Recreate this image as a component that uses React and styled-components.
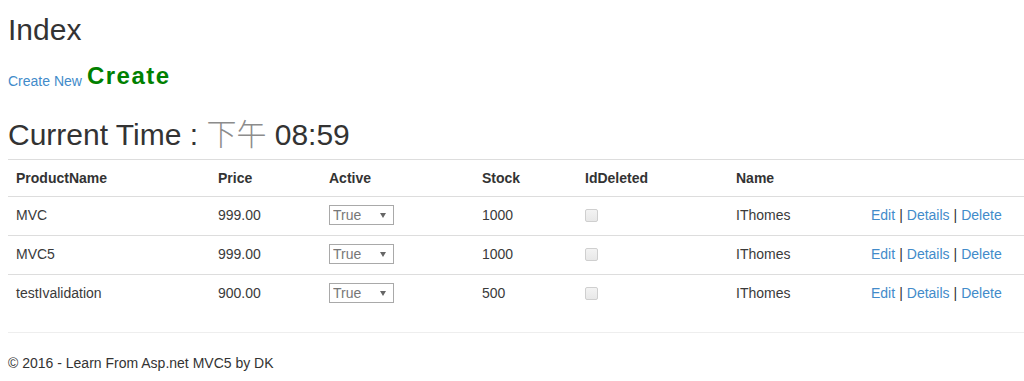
import React from 'react';
import styled, { createGlobalStyle } from 'styled-components';

const GlobalStyle = createGlobalStyle`
  html, body {
    margin: 0;
    padding: 0;
    background: #fff;
  }
  body {
    font-family: "Liberation Sans", Arial, "Helvetica Neue", Helvetica, sans-serif;
    font-size: 14px;
    line-height: 20px;
    color: #333;
    overflow: hidden;
  }
  a {
    color: #428bca;
    text-decoration: none;
  }
`;

const Container = styled.div`
  padding: 0 0 0 8px;
`;

const Title = styled.h2`
  margin: 13px 0 0;
  font-size: 30px;
  font-weight: 500;
  line-height: 1.1;
`;

const CreateRow = styled.p`
  margin: 17px 0 0;
  line-height: 20px;
`;

const CreateBig = styled.span`
  color: green;
  font-size: 24px;
  font-weight: bold;
  letter-spacing: 1.5px;
  line-height: 1.1;
  margin-left: 5px;
  vertical-align: 2px;
`;

const TimeHeading = styled.h2`
  margin: 25px 0 8px;
  font-size: 30px;
  font-weight: 500;
  line-height: 1.1;
`;

const AmPm = styled.span`
  color: #8c8c8c;
  font-family: "Noto Sans CJK TC", "Noto Sans CJK SC", sans-serif;
  font-weight: 300;
`;

const Table = styled.table`
  width: 100%;
  border-collapse: separate;
  border-spacing: 0;
  table-layout: fixed;
  margin-bottom: 19px;
`;

const Th = styled.th`
  text-align: left;
  font-weight: bold;
  padding: 8px;
  line-height: 20px;
  border-top: 1px solid #ddd;
  vertical-align: top;
`;

const Td = styled.td`
  padding: 8px;
  height: 22px;
  line-height: 20px;
  border-top: 1px solid #ddd;
  vertical-align: top;
  color: #3a3a3a;
`;

const SelectWrap = styled.span`
  position: relative;
  display: inline-block;
  vertical-align: baseline;

  &::after {
    content: '';
    position: absolute;
    right: 8px;
    top: 8px;
    border-left: 3px solid transparent;
    border-right: 3px solid transparent;
    border-top: 5px solid #666;
    pointer-events: none;
  }
`;

const Select = styled.select`
  appearance: none;
  -webkit-appearance: none;
  width: 65px;
  height: 20px;
  margin: 0;
  padding: 0 0 0 3px;
  border: 1px solid #a9a9a9;
  border-radius: 0;
  background: #fff;
  color: #777;
  font-family: "Liberation Sans", Arial, sans-serif;
  font-size: 14px;
  line-height: 18px;
`;

const Check = styled.span`
  display: inline-block;
  width: 11px;
  height: 11px;
  margin-top: 4px;
  border: 1px solid #cfcfcf;
  border-radius: 2px;
  background: linear-gradient(#f3f3f3, #e8e8e8);
`;

const Sep = styled.span`
  color: #333;
  margin: 0 4px;
`;

const Rule = styled.hr`
  margin: 0 0 20px;
  border: 0;
  border-top: 1px solid #eee;
  height: 0;
`;

const Footer = styled.footer`
  p {
    margin: 0;
  }
`;

const columns = ['ProductName', 'Price', 'Active', 'Stock', 'IdDeleted', 'Name', ''];
const widths = [202, 111, 153, 103, 151, 135, null];

const products = [
  { name: 'MVC', price: '999.00', stock: '1000', owner: 'IThomes' },
  { name: 'MVC5', price: '999.00', stock: '1000', owner: 'IThomes' },
  { name: 'testIvalidation', price: '900.00', stock: '500', owner: 'IThomes' },
];

export default function App() {
  return (
    <Container>
      <GlobalStyle />
      <Title>Index</Title>
      <CreateRow>
        <a href="#">Create New</a>
        <CreateBig>Create</CreateBig>
      </CreateRow>
      <TimeHeading>
        Current Time : <AmPm>下午</AmPm> 08:59
      </TimeHeading>
      <Table>
        <colgroup>
          {widths.map((w, i) => (
            <col key={i} style={w ? { width: w } : undefined} />
          ))}
        </colgroup>
        <tbody>
          <tr>
            {columns.map((c, i) => (
              <Th key={i}>{c}</Th>
            ))}
          </tr>
          {products.map((p, i) => (
            <tr key={i}>
              <Td>{p.name}</Td>
              <Td>{p.price}</Td>
              <Td>
                <SelectWrap>
                  <Select defaultValue="true">
                    <option value="true">True</option>
                    <option value="false">False</option>
                  </Select>
                </SelectWrap>
              </Td>
              <Td>{p.stock}</Td>
              <Td>
                <Check />
              </Td>
              <Td>{p.owner}</Td>
              <Td>
                <a href="#">Edit</a>
                <Sep>|</Sep>
                <a href="#">Details</a>
                <Sep>|</Sep>
                <a href="#">Delete</a>
              </Td>
            </tr>
          ))}
        </tbody>
      </Table>
      <Rule />
      <Footer>
        <p>© 2016 - Learn From Asp.net MVC5 by DK</p>
      </Footer>
    </Container>
  );
}
